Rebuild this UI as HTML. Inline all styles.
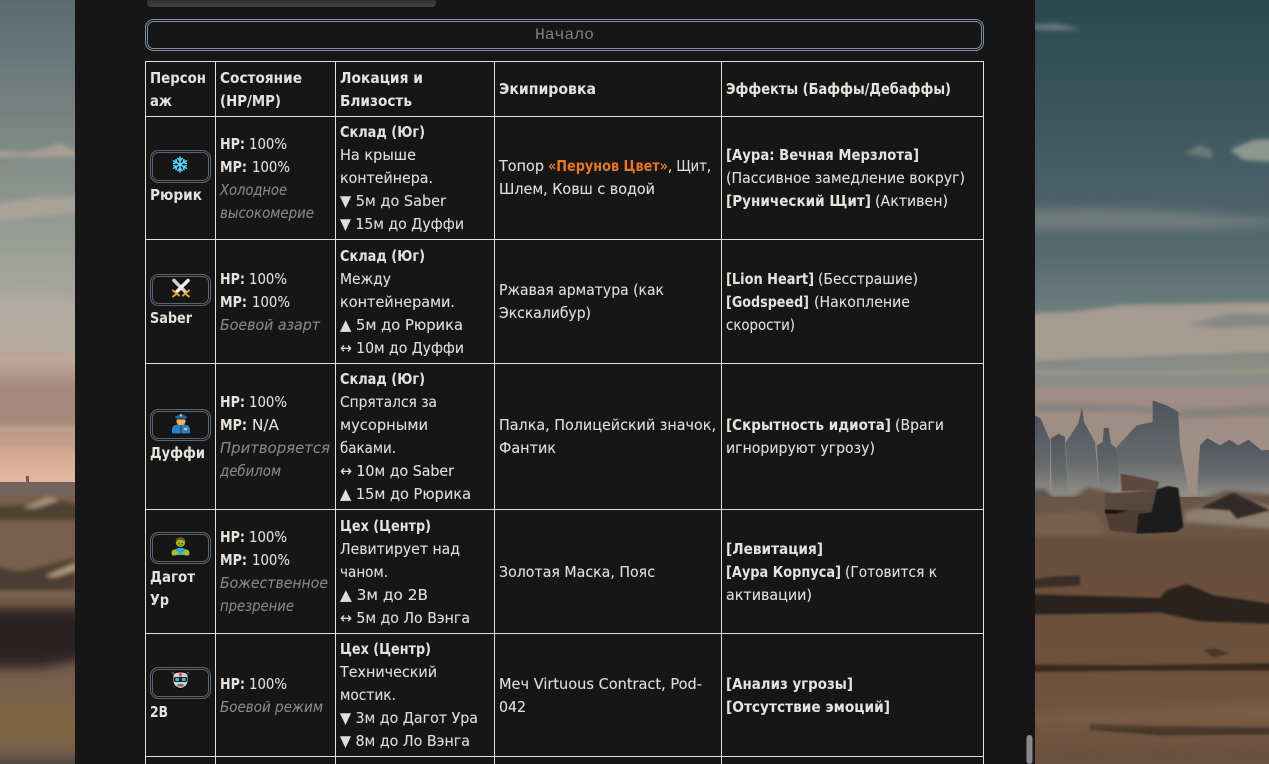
<!DOCTYPE html>
<html lang="ru"><head><meta charset="utf-8"><title>Таблица</title>
<style>
html,body{margin:0;padding:0;width:1269px;height:764px;overflow:hidden;background:#161616}
svg{position:absolute;left:0;top:0;display:block}
text{font-family:"DejaVu Sans","Liberation Sans",sans-serif;font-size:15px;fill:#dedede;stroke:#dedede;stroke-width:.12;white-space:pre}
.b{font-weight:bold;fill:#e4e4de;stroke:none}
.i{font-style:italic;fill:#868686;stroke:#868686}
.o{fill:#e8771e;stroke:none;font-weight:bold}
.m{font-family:"Liberation Mono",monospace;font-size:16px;fill:#808080;stroke:none}
</style></head><body>
<svg width="1269" height="764" viewBox="0 0 1269 764" xmlns="http://www.w3.org/2000/svg">
<defs>
<linearGradient id="sl" x1="0" y1="0" x2="0" y2="1">
<stop offset="0" stop-color="#5a6a70"/><stop offset=".22" stop-color="#75817f"/><stop offset=".58" stop-color="#a3a59d"/><stop offset=".74" stop-color="#bba595"/><stop offset=".86" stop-color="#a88d7e"/><stop offset=".93" stop-color="#d1a68f"/><stop offset="1" stop-color="#e4b9a0"/>
</linearGradient>
<linearGradient id="sr" x1="0" y1="0" x2="0" y2="1">
<stop offset="0" stop-color="#2b4850"/><stop offset=".25" stop-color="#3e585f"/><stop offset=".5" stop-color="#566b70"/><stop offset=".62" stop-color="#6d7f7e"/><stop offset=".75" stop-color="#8a8c88"/><stop offset="1" stop-color="#a08e85"/>
</linearGradient>
<linearGradient id="gr" x1="0" y1="0" x2="0" y2="1">
<stop offset="0" stop-color="#64503f"/><stop offset=".4" stop-color="#6a4f3c"/><stop offset="1" stop-color="#70563f"/>
</linearGradient>
<linearGradient id="mt" x1="0" y1="0" x2="0" y2="1">
<stop offset="0" stop-color="#4e545d"/><stop offset=".6" stop-color="#666a6c"/><stop offset="1" stop-color="#96938c"/>
</linearGradient>
<linearGradient id="tb" x1="0" y1="0" x2="0" y2="1"><stop offset="0" stop-color="#303030"/><stop offset="1" stop-color="#444"/></linearGradient>
<filter id="s2" x="-30%" y="-100%" width="160%" height="300%"><feGaussianBlur stdDeviation="2.5"/></filter>
<filter id="s5" x="-30%" y="-100%" width="160%" height="300%"><feGaussianBlur stdDeviation="6"/></filter>
<filter id="r2" x="-30%" y="-100%" width="160%" height="300%"><feGaussianBlur stdDeviation="6"/></filter>
<filter id="r3" x="-30%" y="-100%" width="160%" height="300%"><feGaussianBlur stdDeviation="14"/></filter>
<filter id="r4" x="-30%" y="-100%" width="160%" height="300%"><feGaussianBlur stdDeviation="3"/></filter>
<filter id="r1" x="-10%" y="-30%" width="120%" height="160%"><feGaussianBlur stdDeviation="1.5"/></filter>
</defs>

<!-- left background -->
<rect x="0" y="0" width="76" height="483" fill="url(#sl)"/>
<g filter="url(#s2)">
<path d="M-30 148L25 153L45 149L60 143L72 150L110 156L40 157L-30 157Z" fill="#a9a095"/>
<path d="M-30 165L14 170L-30 173Z" fill="#a58c7c"/>
<path d="M-30 208L40 197L110 196V210L30 218L-30 224Z" fill="#a8a298"/>
</g>
<g filter="url(#s5)">
<path d="M-30 300L30 294L110 304V355L-30 352Z" fill="#b3aea4" opacity=".7"/>
<path d="M-30 380H110V425H-30Z" fill="#a5897a"/>
</g>
<g filter="url(#s2)">
<path d="M-30 358H110V361H-30Z" fill="#c4aa9b"/>
<path d="M-30 428H110V431H-30Z" fill="#cba895"/>
<path d="M-30 442H110V446H-30Z" fill="#b99b8a"/>
</g>
<rect x="0" y="482" width="76" height="282" fill="#78614c"/>
<rect x="0" y="482" width="76" height="14" fill="#74655a"/>
<rect x="26" y="476" width="3" height="6" fill="#6a625e"/>
<g filter="url(#s2)">
<path d="M-30 508L20 505L50 498L110 512V520H-30Z" fill="#4f4033"/>
<path d="M22 508L48 497L60 500L35 508Z" fill="#a8967f"/>
<path d="M-30 560L20 572L76 558V590L-30 590Z" fill="#4b3d32"/>
<path d="M45 576L76 563V570L55 577Z" fill="#b49b80"/>
</g>
<g filter="url(#s5)">
<path d="M-30 608H110V655L40 668L-30 668Z" fill="#2b2420"/>
<path d="M-30 705H110V742H-30Z" fill="#80633f"/>
<path d="M-30 758H110V790H-30Z" fill="#484442"/>
</g>

<!-- right background -->
<rect x="1035" y="0" width="234" height="510" fill="url(#sr)"/>
<g transform="translate(1000 0) scale(.3333)">
<g filter="url(#r2)">
<path d="M60 75L170 70L245 88L170 92L60 85Z" fill="#68787a"/>
<path d="M555 460L600 435L635 450V475Z" fill="#6b7b7b"/>
<path d="M690 450L760 420L900 412V490L730 480Z" fill="#8f9690"/>
</g>
<g filter="url(#r3)">
<path d="M60 630L280 625L540 635L900 665V675L560 690L60 690Z" fill="#707c7a"/>
</g>
<g filter="url(#r2)">
<path d="M60 942L220 935L370 915L900 905V1055L60 1085Z" fill="#a69b90"/>
<path d="M560 975L690 940L900 945V975L660 985Z" fill="#878884"/>
</g>
<g filter="url(#r2)">
<path d="M60 1095L900 1060V1146H60Z" fill="#8a8c86"/>
<path d="M60 1112L400 1118L900 1105V1125H60Z" fill="#9e978c"/>
</g>
</g>
<g transform="translate(1000 382) scale(.3333)">
<rect x="60" y="0" width="850" height="360" fill="#a08d84"/>
<g filter="url(#r2)">
<path d="M60 -20H900V8L600 15H60Z" fill="#8b8c88"/>
<path d="M60 62L400 70L540 82L900 62V100L560 110L400 88L60 88Z" fill="#88837e"/>
</g>
<path fill="url(#mt)" d="M105 100L122 110L150 175V350H105Z"/>
<path fill="url(#mt)" d="M152 170L175 155L195 165L205 350H155Z"/>
<path fill="url(#mt)" d="M198 180L235 125L246 75L252 120L285 180L300 350H205Z"/>
<path fill="url(#mt)" d="M290 190L308 180L312 138L326 138L333 185L350 200L362 350H300Z"/>
<path fill="url(#mt)" d="M350 195L410 130L458 120L458 55L500 70L535 90L540 190L570 350H360Z"/>
<path fill="url(#mt)" d="M590 350L600 190L622 168L660 190L688 173L715 190L745 173L785 205L900 200V350Z"/>
<rect x="60" y="345" width="850" height="801" fill="url(#gr)"/>
<g filter="url(#r2)">
<path d="M60 350L150 345L225 342L265 315L320 328L360 345L560 352L620 345L680 325L900 345V470L600 465H60Z" fill="#6b5646"/>
<path d="M60 405L280 385L320 440L300 460H60Z" fill="#76604e"/>
<path d="M555 390L700 350L900 395V445L700 430L555 420Z" fill="#8e7e6e"/>
<path d="M60 322L135 322L160 345H60Z" fill="#5b534b"/>
</g>
<g filter="url(#r4)">
<path d="M600 378L700 332L810 385L710 410L690 385Z" fill="#332c27"/>
</g>
<g filter="url(#r1)">
<path d="M362 275L440 290L478 300L470 325L365 328Z" fill="#5e4a3c"/>
<path d="M315 335L470 325L460 390L315 390Z" fill="#58463a"/>
<path d="M315 385L460 385L415 395L410 455L330 445Z" fill="#4f3e32"/>
<path d="M470 322L505 312L535 318L550 435L530 450L410 455L415 395L455 390Z" fill="#1f1b1b"/>
<path d="M315 382L385 385L350 395L315 395Z" fill="#171413"/>
</g>
<g filter="url(#r4)">
<path d="M60 598L105 592L150 585L240 580L240 610L60 620Z" fill="#3a2d25"/>
<path d="M60 636L480 648L500 625L560 606L640 640L810 665L900 690V728L600 718L480 692L60 698Z" fill="#2a221c"/>
<path d="M60 848L400 850L900 842V866L400 866L60 870Z" fill="#38291f"/>
<path d="M270 1024L480 1032L900 1036V1056L480 1060L270 1044Z" fill="#46362a"/>
<path d="M610 802L650 800L690 815L640 826Z" fill="#4a382b"/>
</g>
<g filter="url(#r3)">
<path d="M60 1000L900 960V1025H60Z" fill="#7a5d46"/>
<path d="M60 1100L900 1090V1200H60Z" fill="#6a5140"/>
</g>
</g>

<!-- panel -->
<rect x="75" y="0" width="960" height="764" fill="#161616"/>
<path d="M147 0H436V3A4 4 0 0 1 432 7H151A4 4 0 0 1 147 3Z" fill="url(#tb)"/>
<rect x="1026.5" y="735" width="6" height="29" rx="3" fill="#8a8a8a"/>

<!-- start button -->
<rect x="145.5" y="19.5" width="838" height="31" rx="8" fill="#161616" stroke="#7e8da2"/>
<rect x="147.5" y="21.5" width="834" height="27" rx="6" fill="none" stroke="#7e8da2"/>
<text class="m" x="535" y="39" textLength="59" lengthAdjust="spacingAndGlyphs">Начало</text>

<!-- table grid -->
<g fill="#e0e0d6">
<rect x="145" y="61" width="839" height="1"/><rect x="145" y="116" width="839" height="1"/>
<rect x="145" y="239" width="839" height="1"/><rect x="145" y="363" width="839" height="1"/>
<rect x="145" y="509" width="839" height="1"/><rect x="145" y="633" width="839" height="1"/>
<rect x="145" y="756" width="839" height="1"/>
<rect x="145" y="61" width="1" height="703"/><rect x="215" y="61" width="1" height="703"/>
<rect x="335" y="61" width="1" height="703"/><rect x="494" y="61" width="1" height="703"/>
<rect x="721" y="61" width="1" height="703"/><rect x="983" y="61" width="1" height="703"/>
</g>

<!-- header -->
<text class="b" x="150" y="83" textLength="56" lengthAdjust="spacingAndGlyphs">Персон</text>
<text class="b" x="150" y="106" textLength="22" lengthAdjust="spacingAndGlyphs">аж</text>
<text class="b" x="220" y="83" textLength="82" lengthAdjust="spacingAndGlyphs">Состояние</text>
<text class="b" x="220" y="106" textLength="61" lengthAdjust="spacingAndGlyphs">(HP/MP)</text>
<text class="b" x="340" y="83" textLength="83" lengthAdjust="spacingAndGlyphs">Локация и</text>
<text class="b" x="340" y="106" textLength="72" lengthAdjust="spacingAndGlyphs">Близость</text>
<text class="b" x="499" y="94" textLength="97" lengthAdjust="spacingAndGlyphs">Экипировка</text>
<text class="b" x="726" y="94" textLength="225" lengthAdjust="spacingAndGlyphs">Эффекты (Баффы/Дебаффы)</text>

<!-- icon frames -->
<g fill="none" stroke="#5a6675">
<rect x="150.5" y="150.5" width="60" height="32" rx="8"/><rect x="152.5" y="152.5" width="56" height="28" rx="6"/>
<rect x="150.5" y="274.5" width="60" height="31" rx="8"/><rect x="152.5" y="276.5" width="56" height="27" rx="6"/>
<rect x="150.5" y="409.5" width="60" height="31" rx="8"/><rect x="152.5" y="411.5" width="56" height="27" rx="6"/>
<rect x="150.5" y="532.5" width="60" height="31" rx="8"/><rect x="152.5" y="534.5" width="56" height="27" rx="6"/>
<rect x="150.5" y="667.5" width="60" height="31" rx="8"/><rect x="152.5" y="669.5" width="56" height="27" rx="6"/>
</g>

<!-- snowflake -->
<g transform="translate(180 164.5)" stroke-linecap="round" fill="none">
<circle r="8" fill="#06161c" stroke="none"/>
<g stroke="#55d6f2" stroke-width="1.6">
<path d="M0-7.5V7.5M-6.5-3.7L6.5 3.7M-6.5 3.7L6.5-3.7"/>
<path d="M-2.2-6L0-3.8L2.2-6M-2.2 6L0 3.8L2.2 6M-6.2-1L-3.4-2L-4-5M6.2 1L3.4 2L4 5M-6.2 1L-3.4 2L-4 5M6.2-1L3.4-2L4-5"/>
</g>
</g>
<!-- swords -->
<g transform="translate(181 288)" stroke-linecap="round" fill="none">
<path d="M-6.5-7L5 5M6.5-7L-5 5" stroke="#0c0c0c" stroke-width="5.5"/>
<path d="M-7-7.5L4.5 4" stroke="#cfcfcf" stroke-width="3.6"/>
<path d="M7-7.5L-4.5 4" stroke="#f0f0f0" stroke-width="3.6"/>
<path d="M-8 2.5L-2 7.5M8 2.5L2 7.5M-4 5.5L-8 8.5M4 5.5L8 8.5" stroke="#e3a52a" stroke-width="2"/>
</g>
<!-- police officer -->
<g transform="translate(181 423)">
<path d="M-9.5 11V6Q-9.5 1.5-4 1H4Q9.5 1.5 9.5 6V11Z" fill="#2f7fc4" stroke="#070a0e" stroke-width="1"/>
<rect x="-4.5" y="-5.5" width="9" height="7.5" rx="3.5" fill="#f3b04c"/>
<path d="M-7-6L0-10L7-6L5-4H-5Z" fill="#1f6aa8" stroke="#070a0e" stroke-width=".7"/>
<rect x="-1" y="-8.5" width="2" height="2" fill="#f1c232"/>
<rect x="3" y="5" width="3" height="2" fill="#f1c232"/>
<rect x="-1" y="2" width="2" height="8" fill="#1d5c93"/>
</g>
<!-- zombie -->
<g transform="translate(180.5 546.5)">
<path d="M-9 8Q-9 3-5 2L-2 1H2L5 2Q9 3 9 8L5 9H-5Z" fill="#39a0dc" stroke="#07090c" stroke-width=".8"/>
<path d="M-9 7.5Q-9 3-6 3L-1 7L-5 9H-8Z M9 7.5Q9 3 6 3L1 7L5 9H8Z" fill="#a0c41a"/>
<circle cy="-4" r="4.6" fill="#a2c01a"/>
<path d="M-4.8-4Q-5.2-9.3 0-9.3Q5.2-9.3 4.8-4Q3-7 0-6.8Q-3-7-4.8-4Z" fill="#7a4a24"/>
<rect x="-2.2" y="-3.6" width="1.2" height="1.4" fill="#222"/><rect x="1" y="-3.6" width="1.2" height="1.4" fill="#222"/>
<rect x="-1.2" y="-1" width="2.6" height=".8" fill="#3a4a08"/>
</g>
<!-- robot -->
<g transform="translate(180.5 680)">
<path d="M-7.5-8L-6.5-3M7.5-8L6.5-3" stroke="#777" stroke-width="1.4"/>
<path d="M-7.5-4Q-7.5-8 0-8Q7.5-8 7.5-4V2Q6.5 7.5 0 8.5Q-6.5 7.5-7.5 2Z" fill="#cfcfcf" stroke="#080808" stroke-width=".9"/>
<rect x="-1.2" y="-8" width="2.4" height="4.5" fill="#d2452f"/>
<rect x="-6.5" y="-3" width="13" height="5" rx="1.5" fill="#1d2328"/>
<rect x="-5" y="-2" width="3.4" height="3" fill="#36c1d8"/><rect x="1.6" y="-2" width="3.4" height="3" fill="#36c1d8"/>
<rect x="-3" y="4" width="6" height="2.5" fill="#6f6f6f"/>
</g>

<!-- row 1 -->
<text class="b" x="150" y="200" textLength="52" lengthAdjust="spacingAndGlyphs">Рюрик</text>
<text class="b" x="220" y="149" textLength="25" lengthAdjust="spacingAndGlyphs">HP:</text><text x="249" y="149" textLength="38" lengthAdjust="spacingAndGlyphs">100%</text>
<text class="b" x="220" y="172" textLength="27" lengthAdjust="spacingAndGlyphs">MP:</text><text x="252" y="172" textLength="38" lengthAdjust="spacingAndGlyphs">100%</text>
<text class="i" x="220" y="195" textLength="67" lengthAdjust="spacingAndGlyphs">Холодное</text>
<text class="i" x="220" y="218" textLength="94" lengthAdjust="spacingAndGlyphs">высокомерие</text>
<text class="b" x="340" y="137" textLength="85" lengthAdjust="spacingAndGlyphs">Склад (Юг)</text>
<text x="340" y="160" textLength="76" lengthAdjust="spacingAndGlyphs">На крыше</text>
<text x="340" y="183" textLength="93" lengthAdjust="spacingAndGlyphs">контейнера.</text>
<text x="340" y="206" textLength="106" lengthAdjust="spacingAndGlyphs">▼ 5м до Saber</text>
<text x="340" y="229" textLength="124" lengthAdjust="spacingAndGlyphs">▼ 15м до Дуффи</text>
<text x="499" y="171" textLength="45" lengthAdjust="spacingAndGlyphs">Топор</text>
<text class="o" x="548" y="171" textLength="120" lengthAdjust="spacingAndGlyphs">«Перунов Цвет»</text>
<text x="668" y="171" textLength="43" lengthAdjust="spacingAndGlyphs">, Щит,</text>
<text x="499" y="194" textLength="156" lengthAdjust="spacingAndGlyphs">Шлем, Ковш с водой</text>
<text class="b" x="726" y="160" textLength="193" lengthAdjust="spacingAndGlyphs">[Аура: Вечная Мерзлота]</text>
<text x="726" y="183" textLength="239" lengthAdjust="spacingAndGlyphs">(Пассивное замедление вокруг)</text>
<text class="b" x="726" y="206" textLength="145" lengthAdjust="spacingAndGlyphs">[Рунический Щит]</text>
<text x="875" y="206" textLength="73" lengthAdjust="spacingAndGlyphs">(Активен)</text>

<!-- row 2 -->
<text class="b" x="150" y="323" textLength="42" lengthAdjust="spacingAndGlyphs">Saber</text>
<text class="b" x="220" y="284" textLength="25" lengthAdjust="spacingAndGlyphs">HP:</text><text x="249" y="284" textLength="38" lengthAdjust="spacingAndGlyphs">100%</text>
<text class="b" x="220" y="307" textLength="27" lengthAdjust="spacingAndGlyphs">MP:</text><text x="252" y="307" textLength="38" lengthAdjust="spacingAndGlyphs">100%</text>
<text class="i" x="220" y="330" textLength="100" lengthAdjust="spacingAndGlyphs">Боевой азарт</text>
<text class="b" x="340" y="261" textLength="85" lengthAdjust="spacingAndGlyphs">Склад (Юг)</text>
<text x="340" y="284" textLength="51" lengthAdjust="spacingAndGlyphs">Между</text>
<text x="340" y="307" textLength="115" lengthAdjust="spacingAndGlyphs">контейнерами.</text>
<text x="340" y="330" textLength="123" lengthAdjust="spacingAndGlyphs">▲ 5м до Рюрика</text>
<text x="340" y="353" textLength="124" lengthAdjust="spacingAndGlyphs">↔ 10м до Дуффи</text>
<text x="499" y="295" textLength="165" lengthAdjust="spacingAndGlyphs">Ржавая арматура (как</text>
<text x="499" y="318" textLength="92" lengthAdjust="spacingAndGlyphs">Экскалибур)</text>
<text class="b" x="726" y="284" textLength="88" lengthAdjust="spacingAndGlyphs">[Lion Heart]</text>
<text x="818" y="284" textLength="100" lengthAdjust="spacingAndGlyphs">(Бесстрашие)</text>
<text class="b" x="726" y="307" textLength="83" lengthAdjust="spacingAndGlyphs">[Godspeed]</text>
<text x="814" y="307" textLength="96" lengthAdjust="spacingAndGlyphs">(Накопление</text>
<text x="726" y="330" textLength="69" lengthAdjust="spacingAndGlyphs">скорости)</text>

<!-- row 3 -->
<text class="b" x="150" y="458" textLength="55" lengthAdjust="spacingAndGlyphs">Дуффи</text>
<text class="b" x="220" y="407" textLength="25" lengthAdjust="spacingAndGlyphs">HP:</text><text x="249" y="407" textLength="38" lengthAdjust="spacingAndGlyphs">100%</text>
<text class="b" x="220" y="430" textLength="27" lengthAdjust="spacingAndGlyphs">MP:</text><text x="252" y="430" textLength="27" lengthAdjust="spacingAndGlyphs">N/A</text>
<text class="i" x="220" y="453" textLength="110" lengthAdjust="spacingAndGlyphs">Притворяется</text>
<text class="i" x="220" y="476" textLength="61" lengthAdjust="spacingAndGlyphs">дебилом</text>
<text class="b" x="340" y="384" textLength="85" lengthAdjust="spacingAndGlyphs">Склад (Юг)</text>
<text x="340" y="407" textLength="97" lengthAdjust="spacingAndGlyphs">Спрятался за</text>
<text x="340" y="430" textLength="88" lengthAdjust="spacingAndGlyphs">мусорными</text>
<text x="340" y="453" textLength="56" lengthAdjust="spacingAndGlyphs">баками.</text>
<text x="340" y="476" textLength="114" lengthAdjust="spacingAndGlyphs">↔ 10м до Saber</text>
<text x="340" y="499" textLength="131" lengthAdjust="spacingAndGlyphs">▲ 15м до Рюрика</text>
<text x="499" y="430" textLength="217" lengthAdjust="spacingAndGlyphs">Палка, Полицейский значок,</text>
<text x="499" y="453" textLength="57" lengthAdjust="spacingAndGlyphs">Фантик</text>
<text class="b" x="726" y="430" textLength="165" lengthAdjust="spacingAndGlyphs">[Скрытность идиота]</text>
<text x="895" y="430" textLength="49" lengthAdjust="spacingAndGlyphs">(Враги</text>
<text x="726" y="453" textLength="149" lengthAdjust="spacingAndGlyphs">игнорируют угрозу)</text>

<!-- row 4 -->
<text class="b" x="150" y="582" textLength="45" lengthAdjust="spacingAndGlyphs">Дагот</text>
<text class="b" x="150" y="605" textLength="19" lengthAdjust="spacingAndGlyphs">Ур</text>
<text class="b" x="220" y="542" textLength="25" lengthAdjust="spacingAndGlyphs">HP:</text><text x="249" y="542" textLength="38" lengthAdjust="spacingAndGlyphs">100%</text>
<text class="b" x="220" y="565" textLength="27" lengthAdjust="spacingAndGlyphs">MP:</text><text x="252" y="565" textLength="38" lengthAdjust="spacingAndGlyphs">100%</text>
<text class="i" x="220" y="588" textLength="108" lengthAdjust="spacingAndGlyphs">Божественное</text>
<text class="i" x="220" y="611" textLength="74" lengthAdjust="spacingAndGlyphs">презрение</text>
<text class="b" x="340" y="531" textLength="91" lengthAdjust="spacingAndGlyphs">Цех (Центр)</text>
<text x="340" y="554" textLength="120" lengthAdjust="spacingAndGlyphs">Левитирует над</text>
<text x="340" y="577" textLength="48" lengthAdjust="spacingAndGlyphs">чаном.</text>
<text x="340" y="600" textLength="88" lengthAdjust="spacingAndGlyphs">▲ 3м до 2B</text>
<text x="340" y="623" textLength="130" lengthAdjust="spacingAndGlyphs">↔ 5м до Ло Вэнга</text>
<text x="499" y="577" textLength="156" lengthAdjust="spacingAndGlyphs">Золотая Маска, Пояс</text>
<text class="b" x="726" y="554" textLength="97" lengthAdjust="spacingAndGlyphs">[Левитация]</text>
<text class="b" x="726" y="577" textLength="115" lengthAdjust="spacingAndGlyphs">[Аура Корпуса]</text>
<text x="845" y="577" textLength="92" lengthAdjust="spacingAndGlyphs">(Готовится к</text>
<text x="726" y="600" textLength="86" lengthAdjust="spacingAndGlyphs">активации)</text>

<!-- row 5 -->
<text class="b" x="150" y="717" textLength="18" lengthAdjust="spacingAndGlyphs">2B</text>
<text class="b" x="220" y="689" textLength="25" lengthAdjust="spacingAndGlyphs">HP:</text><text x="249" y="689" textLength="38" lengthAdjust="spacingAndGlyphs">100%</text>
<text class="i" x="220" y="712" textLength="103" lengthAdjust="spacingAndGlyphs">Боевой режим</text>
<text class="b" x="340" y="654" textLength="91" lengthAdjust="spacingAndGlyphs">Цех (Центр)</text>
<text x="340" y="677" textLength="97" lengthAdjust="spacingAndGlyphs">Технический</text>
<text x="340" y="700" textLength="56" lengthAdjust="spacingAndGlyphs">мостик.</text>
<text x="340" y="723" textLength="138" lengthAdjust="spacingAndGlyphs">▼ 3м до Дагот Ура</text>
<text x="340" y="746" textLength="130" lengthAdjust="spacingAndGlyphs">▼ 8м до Ло Вэнга</text>
<text x="499" y="689" textLength="203" lengthAdjust="spacingAndGlyphs">Меч Virtuous Contract, Pod-</text>
<text x="499" y="712" textLength="27" lengthAdjust="spacingAndGlyphs">042</text>
<text class="b" x="726" y="689" textLength="127" lengthAdjust="spacingAndGlyphs">[Анализ угрозы]</text>
<text class="b" x="726" y="712" textLength="164" lengthAdjust="spacingAndGlyphs">[Отсутствие эмоций]</text>
</svg>
</body></html>
